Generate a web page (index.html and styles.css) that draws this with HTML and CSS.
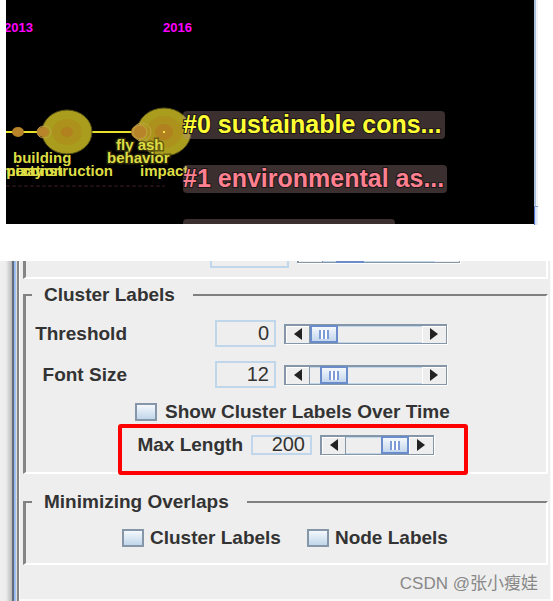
FILE: index.html
```html
<!DOCTYPE html>
<html lang="en">
<head>
  <meta charset="UTF-8" />
  <meta name="viewport" content="width=device-width, initial-scale=1.0" />
  <title>Cluster Labels</title>
  <link rel="stylesheet" href="styles.css">
</head>
<body>

  <div class="timeline">
    <svg class="timeline-chart" role="img" aria-label="Cluster timeline">
      <g class="years">
        <text x="-2" y="32">2013</text>
        <text x="157" y="32">2016</text>
      </g>

      <line class="axis" x1="0" y1="132" x2="158" y2="132" />
      <line class="dashed" x1="0" y1="186" x2="159" y2="186" />

      <!-- nodes -->
      <ellipse class="ring" cx="61" cy="132" rx="25" ry="22" />
      <ellipse class="ring-mid" cx="61" cy="132" rx="15" ry="13" />
      <ellipse class="core" cx="61" cy="132" rx="6" ry="5" />
      <ellipse class="ring" cx="158" cy="132" rx="27" ry="24" />
      <ellipse class="ring-mid" cx="158" cy="132" rx="18" ry="16" />
      <ellipse class="core" cx="158" cy="132" rx="9" ry="8" />
      <rect x="157" y="131" width="2" height="2" fill="#f4e04a" />
      <ellipse class="dot" cx="12" cy="132" rx="6" ry="5" />
      <ellipse class="halo" cx="38" cy="132" rx="7" ry="6" />
      <ellipse class="dot" cx="37" cy="132" rx="6" ry="5" />
      <ellipse class="halo" cx="136" cy="132" rx="9" ry="9" />
      <ellipse class="dot" cx="133" cy="132" rx="8" ry="7" />
      <ellipse class="halo" cx="134" cy="132" rx="7" ry="7" />

      <g class="terms">
        <text class="outlined" x="110" y="150">fly ash</text>
        <text x="7" y="163">building</text>
        <text class="outlined" x="101" y="163">behavior</text>
        <text x="57" y="176" text-anchor="end">optimization</text>
        <text x="37" y="176" text-anchor="end">property</text>
        <text x="107" y="176" text-anchor="end">construction</text>
        <text x="134" y="176">impact</text>
      </g>

      <!-- cluster names -->
      <rect class="pill" x="177" y="111" width="262" height="28" rx="4" />
      <rect class="pill" x="177" y="165" width="264" height="28" rx="4" />
      <rect class="pill" x="177" y="219" width="212" height="28" rx="4" />
      <text class="cluster yellow" x="177" y="133">#0 sustainable cons...</text>
      <text class="cluster pink" x="177" y="187">#1 environmental as...</text>
    </svg>
    <div class="timeline-edge"></div>
  </div>

  <div class="settings">
    <div class="splitter"></div>
    <form class="panel">
      <fieldset class="group group-cut">
        <div class="row row-cut">
          <input class="value value-wide" type="text" value="0" aria-label="Value">
          <div class="scrollbar">
            <button type="button" class="prev" aria-label="Decrease"></button>
            <input type="range" min="0" max="84" value="13" aria-label="Value slider">
            <button type="button" class="next" aria-label="Increase"></button>
          </div>
        </div>
      </fieldset>

      <fieldset class="group group-labels">
        <legend>Cluster Labels</legend>
        <div class="row">
          <label for="threshold">Threshold</label>
          <input class="value" id="threshold" type="text" value="0">
          <div class="scrollbar">
            <button type="button" class="prev" aria-label="Decrease threshold"></button>
            <input type="range" min="0" max="84" value="0" aria-label="Threshold slider">
            <button type="button" class="next" aria-label="Increase threshold"></button>
          </div>
        </div>
        <div class="row">
          <label for="fontSize">Font Size</label>
          <input class="value" id="fontSize" type="text" value="12">
          <div class="scrollbar">
            <button type="button" class="prev" aria-label="Decrease font size"></button>
            <input type="range" min="0" max="84" value="10" aria-label="Font size slider">
            <button type="button" class="next" aria-label="Increase font size"></button>
          </div>
        </div>
        <div class="row row-check">
          <input type="checkbox" id="overTime">
          <label for="overTime">Show Cluster Labels Over Time</label>
        </div>
        <div class="row row-max">
          <label for="maxLength">Max Length</label>
          <input class="value" id="maxLength" type="text" value="200">
          <div class="scrollbar scrollbar-short">
            <button type="button" class="prev" aria-label="Decrease max length"></button>
            <input type="range" min="0" max="200" value="200" aria-label="Max length slider">
            <button type="button" class="next" aria-label="Increase max length"></button>
          </div>
          <div class="highlight"></div>
        </div>
      </fieldset>

      <fieldset class="group group-overlaps">
        <legend>Minimizing Overlaps</legend>
        <div class="row row-overlaps">
          <span class="option">
            <input type="checkbox" id="clusterLabels">
            <label for="clusterLabels">Cluster Labels</label>
          </span>
          <span class="option">
            <input type="checkbox" id="nodeLabels">
            <label for="nodeLabels">Node Labels</label>
          </span>
        </div>
      </fieldset>

      <p class="credit">CSDN @张小瘦娃</p>
    </form>
  </div>

</body>
</html>
```

FILE: styles.css
```css
* {
  box-sizing: border-box;
}

body {
  margin: 0;
  background: #fff;
  color: #333;
  font-family: "Liberation Sans", Arial, sans-serif;
}

/* timeline */
.timeline {
  display: flex;
  height: 224px;
  margin: 0 15px 37px 6px;
}

.timeline-chart {
  flex: 1;
  min-width: 0;
  height: 100%;
  background: #000;
  font-weight: bold;
}

.timeline-edge {
  width: 4px;
  padding-top: 206px;
  background: linear-gradient(to right, #a9c0de 2px, #f0f2f8 2px);
}

.timeline-edge::after {
  content: "";
  display: block;
  height: 18px;
  border-top: 1px solid #7f9fd0;
  background: linear-gradient(to right, #5577d8 1px, #c5d6f0 1px, #e8eef8 3px);
}

.years {
  fill: #f0f;
  font-size: 13px;
}

.axis {
  stroke: #e6e22a;
  stroke-width: 2;
}

.dashed {
  stroke: #3c1a20;
  stroke-dasharray: 4 2;
}

.ring {
  fill: #aa9c1c;
  stroke: #55501a;
}

.ring-mid {
  fill: #ac921c;
}

.core {
  fill: #b0811e;
}

.dot {
  fill: #b8842a;
}

.halo {
  fill: none;
  stroke: #c3a548;
}

.terms {
  fill: #dede44;
  font-size: 15px;
}

.outlined {
  stroke: rgba(60, 56, 10, 0.6);
  stroke-width: 3;
  paint-order: stroke;
}

.pill {
  fill: #b49090;
  fill-opacity: 0.33;
}

.cluster {
  font-size: 25px;
  stroke: #1c1616;
  stroke-width: 2;
  paint-order: stroke;
}

.yellow {
  fill: #ffff33;
}

.pink {
  fill: #ff8090;
}

/* settings */
.settings {
  display: flex;
  margin-right: 2px;
}

.splitter {
  width: 20px;
  background: linear-gradient(to right,
    #f0f0f0 0, #ececec 6px, #b8b8b8 12px,
    #646c7c 12px, #646c7c 14px,
    #8db4ee 14px, #a8c8f0 16px,
    #e4e4e4 16px, #d8d8d8 17px,
    #858585 17px, #858585 19px,
    #fafafa 19px);
}

.panel {
  flex: 1;
  min-width: 0;
  padding: 0 2px 0 3px;
  background: #eee;
  border-right: 1px solid #fafafa;
  border-bottom: 2px solid #fafafa;
}

.group {
  min-width: 0;
  margin: 0;
  padding: 0 0 0 6px;
  border: 2px solid #fff;
  border-top-color: #808080;
  border-left: 3px solid #858585;
}

.group-cut {
  height: 18px;
  border-top: 0;
}

.group-labels {
  height: 190px;
  margin-top: 5px;
  padding-top: 8px;
}

.group-overlaps {
  height: 74px;
  margin-top: 17px;
}

legend {
  padding: 0 18px 0 12px;
  font-size: 19px;
  font-weight: bold;
  line-height: 21px;
}

.row {
  display: flex;
  align-items: center;
  height: 41px;
}

.row label {
  font-size: 19px;
  font-weight: bold;
  white-space: nowrap;
}

.row > label:first-child {
  width: 95px;
  text-align: right;
}

.value {
  width: 61px;
  height: 27px;
  margin: 0 8px 0 88px;
  padding: 0 5px;
  background: #eee;
  border: 2px solid #c0d6ea;
  color: #333;
  font: 20px "Liberation Sans", Arial, sans-serif;
  text-align: right;
}

.row-cut {
  align-items: flex-end;
  height: 7px;
  overflow: hidden;
}

.value-wide {
  width: 79px;
  margin-left: 178px;
}

.row-cut .scrollbar {
  margin-bottom: 5px;
}

.row-check {
  height: 33px;
  padding-left: 103px;
}

.row-max {
  position: relative;
  height: 33px;
}

.row-max > label:first-child {
  width: 211px;
}

.row-max .value {
  height: 20px;
  margin-left: 8px;
}

.highlight {
  position: absolute;
  top: -4px;
  left: 86px;
  width: 350px;
  height: 51px;
  border: 4px solid #f00;
  border-radius: 3px;
  pointer-events: none;
}

.row-overlaps {
  gap: 26px;
  height: 52px;
  padding-left: 90px;
}

.option {
  display: flex;
  align-items: center;
}

input[type="checkbox"] {
  appearance: none;
  flex: none;
  width: 22px;
  height: 18px;
  margin: 0 8px 0 0;
  border: 2px solid #8496a8;
  background: linear-gradient(#f4f8fc, #c0d6ea);
}

.option input[type="checkbox"] {
  margin-right: 6px;
}

/* scrollbar */
.scrollbar {
  display: flex;
  width: 163px;
  height: 20px;
  border: 2px solid #8496a8;
  border-right-width: 1px;
  border-bottom-width: 1px;
  box-shadow: 1px 1px 0 #fff;
}

.scrollbar-short {
  width: 114px;
}

.scrollbar button {
  display: flex;
  align-items: center;
  justify-content: center;
  width: 24px;
  padding: 0;
  border: 0;
  background: #eee;
  box-shadow: inset 1px 1px 0 #fff;
}

.scrollbar button::before {
  content: "";
  border: 6px solid transparent;
}

.scrollbar .prev::before {
  border-left-width: 0;
  border-right: 8px solid #222;
}

.scrollbar .next::before {
  border-right-width: 0;
  border-left: 8px solid #222;
}

.scrollbar input {
  appearance: none;
  flex: 1;
  min-width: 0;
  height: 17px;
  margin: 0;
  background: #eee;
  border-top: 1px solid #c0d6ea;
  box-shadow: -1px 0 0 #8496a8, 1px 0 0 #8496a8, inset 0 -1px 0 #c0d6ea;
}

.scrollbar input::-webkit-slider-thumb {
  appearance: none;
  width: 28px;
  height: 18px;
  margin-top: -1px;
  border: 2px solid #6a8cca;
  background:
    linear-gradient(to right,
      #7d9bd6 2px, #fff 2px, #fff 4px,
      #7d9bd6 4px, #7d9bd6 6px, #fff 6px, #fff 8px,
      #7d9bd6 8px) center / 10px 9px no-repeat,
    linear-gradient(#f4f8fd, #c3d6ec);
}

.credit {
  margin: 0;
  padding: 7px 10px 4px 0;
  color: #888;
  font-family: "Liberation Sans", "Noto Sans CJK SC", sans-serif;
  font-size: 17px;
  line-height: 23px;
  text-align: right;
}
```
